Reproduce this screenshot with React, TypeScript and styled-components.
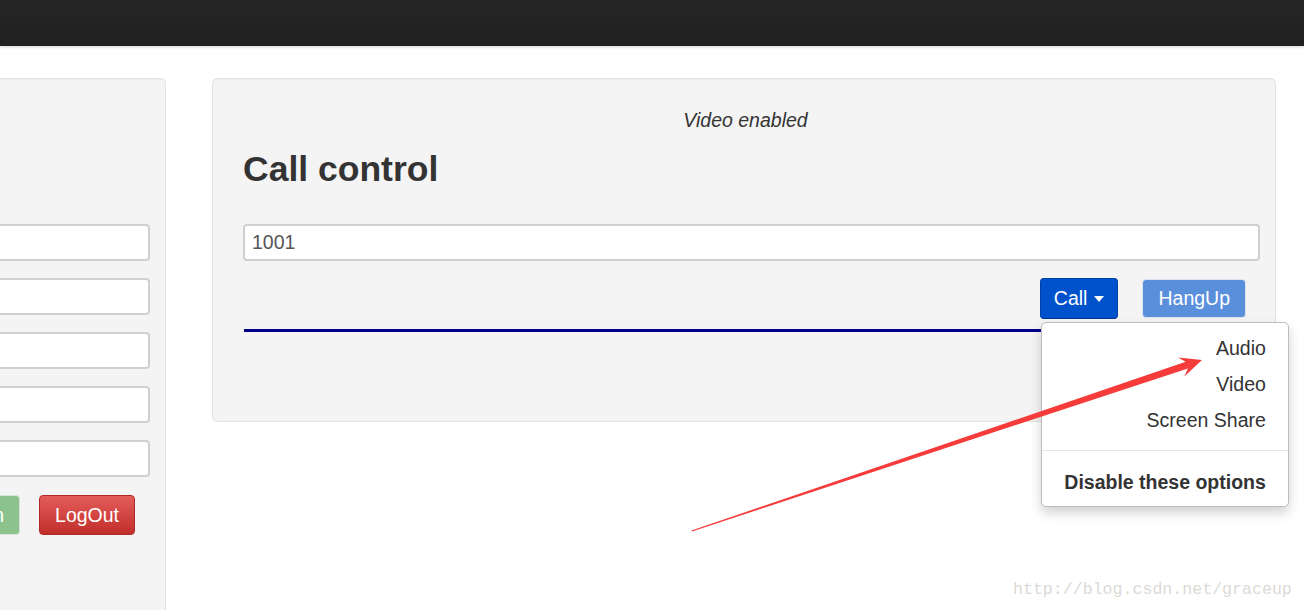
import styled, { createGlobalStyle } from 'styled-components';

const textColor = '#333';
const panelColor = '#f4f4f4';

const GlobalStyle = createGlobalStyle`
  html, body {
    margin: 0;
    padding: 0;
    background: #fff;
  }
  body {
    font-family: "Liberation Sans", Arial, sans-serif;
    color: ${textColor};
  }
  * {
    box-sizing: border-box;
  }
`;

const Page = styled.div`
  position: relative;
  width: 1304px;
  height: 610px;
  overflow: hidden;
`;

const NavBar = styled.div`
  height: 46px;
  background: linear-gradient(to bottom, #262626, #202020);
  box-shadow: 0 1px 3px rgba(0, 0, 0, 0.18);
`;

const Content = styled.div`
  display: flex;
  align-items: flex-start;
  gap: 46px;
  margin-left: -234px;
  padding: 32px 28px 0 0;
`;

const Well = styled.div`
  background-color: ${panelColor};
  border: 1px solid #e3e3e3;
  border-radius: 5px;
  box-shadow: inset 0 1px 1px rgba(0, 0, 0, 0.03);
`;

const LeftPanel = styled(Well)`
  width: 400px;
  height: 560px;
  flex-shrink: 0;
  display: flex;
  flex-direction: column;
  gap: 17px;
  padding: 145px 15px 0;
`;

const CallPanel = styled(Well)`
  flex: 1;
  padding: 27px 15px 89px 30px;
`;

const TextInput = styled.input`
  display: block;
  width: 100%;
  height: 37px;
  padding: 0 7px;
  border: 2px solid #d0d0d0;
  border-radius: 4px;
  background: #fff;
  font-family: "Liberation Sans", Arial, sans-serif;
  font-size: 19.5px;
  color: #555;
  outline: none;
`;

const LeftButtons = styled.div`
  display: flex;
  justify-content: flex-end;
  gap: 19px;
  padding-right: 15px;
  margin-top: 1px;
`;

const Button = styled.button<{ $variant: 'success' | 'danger' | 'primary' | 'muted' }>`
  display: inline-flex;
  align-items: center;
  height: ${({ $variant }) => ($variant === 'muted' ? '39px' : '40px')};
  padding: 0 ${({ $variant }) => ($variant === 'primary' ? '13px 0 13px' : '15px')};
  border-radius: 4px;
  font-family: "Liberation Sans", Arial, sans-serif;
  font-size: 19.5px;
  color: #fff;
  cursor: pointer;
  ${({ $variant }) =>
    $variant === 'success'
      ? `background: #8cc38c; border: 1px solid #d5e6d5;`
      : $variant === 'danger'
      ? `background: linear-gradient(to bottom, #e35d5b, #c12e2a); border: 1px solid #ad2a28;`
      : $variant === 'primary'
      ? `height: 41px; background: #0052cc; border: 1px solid #0041a6; border-bottom-color: #00348a;`
      : `margin-top: 1px; background: #5a8fdb; border: 1px solid #dbe3ee; cursor: default;`}
`;

const Status = styled.div`
  font-size: 19.5px;
  line-height: 28px;
  font-style: italic;
  text-align: center;
  padding-right: 12px;
`;

const Title = styled.h1`
  margin: 16px 0 35px;
  font-size: 35.5px;
  line-height: 39px;
  font-weight: bold;
  color: ${textColor};
`;

const ActionRow = styled.div`
  display: flex;
  justify-content: flex-end;
  align-items: flex-start;
  gap: 24px;
  margin-top: 17px;
  padding-right: 14px;
`;

const DropdownWrap = styled.div`
  position: relative;
`;

const Caret = styled.span`
  display: inline-block;
  margin-left: 7px;
  border-top: 6px solid #fff;
  border-left: 5px solid transparent;
  border-right: 5px solid transparent;
`;

const Menu = styled.ul`
  position: absolute;
  top: calc(100% + 3px);
  left: 1px;
  z-index: 10;
  width: 248px;
  margin: 0;
  padding: 7px 0 6px;
  list-style: none;
  background: #fff;
  border: 1px solid #bdbdbd;
  border-radius: 5px;
  box-shadow: 0 6px 12px rgba(0, 0, 0, 0.18);
`;

const MenuItem = styled.li<{ $strong?: boolean }>`
  padding: 0 22px;
  line-height: 36px;
  text-align: right;
  font-size: 19.5px;
  font-weight: ${({ $strong }) => ($strong ? 'bold' : 'normal')};
  color: ${textColor};
  white-space: nowrap;
`;

const MenuDivider = styled.li`
  height: 1px;
  margin: 12px 0 13px;
  background: #e5e5e5;
`;

const Rule = styled.div`
  height: 3px;
  margin: 10px 0 0 1px;
  background: #000088;
`;

const Annotation = styled.svg`
  position: absolute;
  top: 0;
  left: 0;
  z-index: 20;
  pointer-events: none;
`;

const Watermark = styled.div`
  position: absolute;
  left: 1013px;
  top: 580px;
  z-index: 20;
  font-family: "Liberation Mono", "Courier New", monospace;
  font-size: 16.6px;
  color: #dadad6;
  white-space: nowrap;
`;

const App = () => {
  const fields = ['', '', '', '', ''];
  return (
    <Page>
      <GlobalStyle />
      <NavBar />
      <Content>
        <LeftPanel>
          {fields.map((value, i) => (
            <TextInput key={i} defaultValue={value} />
          ))}
          <LeftButtons>
            <Button $variant="success">Login</Button>
            <Button $variant="danger">LogOut</Button>
          </LeftButtons>
        </LeftPanel>
        <CallPanel>
          <Status>Video enabled</Status>
          <Title>Call control</Title>
          <TextInput defaultValue="1001" />
          <ActionRow>
            <DropdownWrap>
              <Button $variant="primary">
                Call
                <Caret />
              </Button>
              <Menu>
                <MenuItem>Audio</MenuItem>
                <MenuItem>Video</MenuItem>
                <MenuItem>Screen Share</MenuItem>
                <MenuDivider />
                <MenuItem $strong>Disable these options</MenuItem>
              </Menu>
            </DropdownWrap>
            <Button $variant="muted">HangUp</Button>
          </ActionRow>
          <Rule />
        </CallPanel>
      </Content>
      <Annotation width="1304" height="610" viewBox="0 0 1304 610">
        <polygon
          points="692,531.5 1187.9,368.4 1184.3,376.5 1202,360 1178,357.5 1185.7,361.8 691.5,530.5"
          fill="#f63b3b"
        />
      </Annotation>
      <Watermark>http://blog.csdn.net/graceup</Watermark>
    </Page>
  );
};

export default App;
